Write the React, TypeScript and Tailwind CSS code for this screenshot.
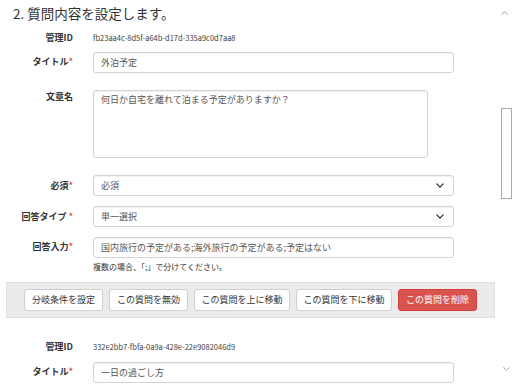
import React from 'react';

const labelCls = "w-[73px] shrink-0 text-right text-[9px] leading-[12px] font-bold text-[#333]";
const fieldCls =
  "h-[21px] rounded-[3px] border border-[#d4d4d4] bg-white px-[7px] text-[9px] leading-[19px] text-[#555] shadow-[inset_0_1px_1px_rgba(0,0,0,0.06)]";

function Req() {
  return <span className="text-[#d9534f]">*</span>;
}

function Chevron({ up = false, className = "" }: { up?: boolean; className?: string }) {
  return (
    <svg viewBox="0 0 10 6" className={className} fill="none" stroke="currentColor" strokeWidth={1.4}>
      <polyline points={up ? "1,5 5,1 9,5" : "1,1 5,5 9,1"} strokeLinecap="round" strokeLinejoin="round" />
    </svg>
  );
}

function IdRow({ id }: { id: string }) {
  return (
    <div className="flex h-[14px] items-center">
      <div className={labelCls}>管理ID</div>
      <div className="ml-[20px] text-[7.5px] leading-[12px] text-[#444]">{id}</div>
    </div>
  );
}

function InputRow({ label, value, className = "" }: { label: React.ReactNode; value: string; className?: string }) {
  return (
    <div className={`flex items-start ${className}`}>
      <div className={`${labelCls} pt-[4px]`}>{label}</div>
      <div className={`ml-[20px] w-[361px] ${fieldCls}`}>{value}</div>
    </div>
  );
}

function SelectRow({ label, value, className = "" }: { label: React.ReactNode; value: string; className?: string }) {
  return (
    <div className={`flex items-start ${className}`}>
      <div className={`${labelCls} pt-[5px]`}>{label}</div>
      <div className={`ml-[20px] flex w-[361px] items-center justify-between ${fieldCls}`}>
        <span>{value}</span>
        <Chevron className="mr-[2px] h-[5px] w-[8px] text-[#222]" />
      </div>
    </div>
  );
}

const actions = [
  { label: "分岐条件を設定", w: "w-[79px]" },
  { label: "この質問を無効", w: "w-[79px]" },
  { label: "この質問を上に移動", w: "w-[96px]" },
  { label: "この質問を下に移動", w: "w-[96px]" },
];

export default function App() {
  return (
    <div className="flex h-[384px] w-[512px] overflow-hidden bg-white font-['Noto_Sans_CJK_JP','Noto_Sans',sans-serif]">
      <div className="w-[496px] shrink-0">
        <h2 className="pl-[13px] pt-[4px] text-[13.5px] leading-[18px] text-[#333]">2. 質問内容を設定します。</h2>

        <div className="mt-[9px]">
          <IdRow id="fb23aa4c-8d5f-a64b-d17d-335a9c0d7aa8" />
        </div>

        <InputRow className="mt-[7px]" label={<>タイトル<Req /></>} value="外泊予定" />

        <div className="mt-[17px] flex items-start">
          <div className={`${labelCls} pt-[1px]`}>文章名</div>
          <div className="ml-[20px] h-[68px] w-[335px] rounded-[3px] border border-[#d4d4d4] bg-white px-[7px] py-[2px] text-[9px] leading-[14px] text-[#555] shadow-[inset_0_1px_1px_rgba(0,0,0,0.06)]">
            何日か自宅を離れて泊まる予定がありますか？
          </div>
        </div>

        <SelectRow className="mt-[17px]" label={<>必須<Req /></>} value="必須" />
        <SelectRow className="mt-[10px]" label={<>回答タイプ <Req /></>} value="単一選択" />
        <InputRow
          className="mt-[10px]"
          label={<>回答入力<Req /></>}
          value="国内旅行の予定がある;海外旅行の予定がある;予定はない"
        />
        <div className="ml-[93px] mt-[4px] text-[8px] leading-[10px] text-[#333]">複数の場合、「;」で分けてください。</div>

        <div className="ml-[6px] mt-[10px] flex h-[36px] w-[489px] items-center gap-[6px] border border-[#e0e0e0] bg-[#ebebeb] pl-[17px]">
          {actions.map((a) => (
            <button
              key={a.label}
              className={`h-[22px] ${a.w} rounded-[3px] border border-[#cfcfcf] bg-white text-[9px] text-[#333]`}
            >
              {a.label}
            </button>
          ))}
          <button className="h-[22px] w-[79px] rounded-[3px] border border-[#d43f3a] bg-[#d9534f] text-[9px] text-white">
            この質問を削除
          </button>
        </div>

        <div className="mt-[22px]">
          <IdRow id="332e2bb7-fbfa-0a9a-428e-22e9082046d9" />
        </div>
        <InputRow className="mt-[8px]" label={<>タイトル<Req /></>} value="一日の過ごし方" />
      </div>

      <div className="flex w-[16px] flex-col items-center">
        <Chevron up className="mt-[11px] h-[4px] w-[7px] text-[#999]" />
        <div className="ml-[5px] mt-[93px] h-[91px] w-[11px] border border-[#aaa] bg-white" />
        <Chevron className="ml-[4px] mt-[168px] h-[4px] w-[7px] text-[#999]" />
      </div>
    </div>
  );
}
